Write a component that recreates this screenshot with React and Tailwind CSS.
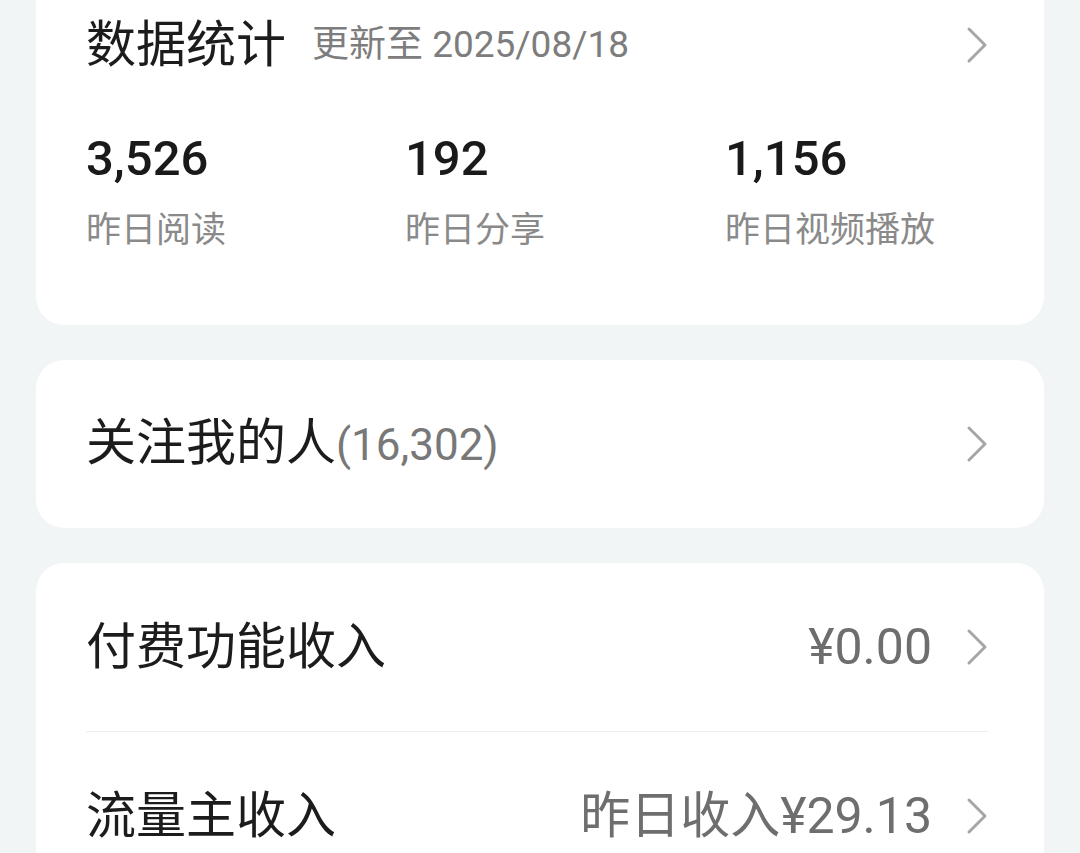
import React from 'react';

const font = { fontFamily: 'Roboto, "Noto Sans CJK SC", sans-serif' };

// 统计数据
const stats = [
  { value: '3,526', label: '昨日阅读' },
  { value: '192', label: '昨日分享' },
  { value: '1,156', label: '昨日视频播放' },
];

function Chevron() {
  return (
    <svg width="22" height="38" viewBox="0 0 22 38" className="shrink-0">
      <polyline
        points="3,3 19,19 3,35"
        fill="none"
        stroke="#a6a6a6"
        strokeWidth="3"
        strokeLinecap="round"
        strokeLinejoin="round"
      />
    </svg>
  );
}

function Row({ title, value }) {
  return (
    <div className="h-[168px] flex items-center justify-between">
      <span className="text-[50px] leading-[60px] text-[#1c1c1c]">{title}</span>
      <div className="flex items-center gap-[34px]">
        {value && <span className="text-[50px] leading-[60px] text-[#6e6e6e]">{value}</span>}
        <Chevron />
      </div>
    </div>
  );
}

export default function App() {
  return (
    <div className="w-[1080px] h-[853px] overflow-hidden bg-[#f1f5f5] px-[36px]" style={font}>
      {/* --- 数据统计 --- */}
      <div className="-mt-[40px] pt-[40px] pb-[72px] pl-[50px] pr-[56px] bg-white rounded-[28px]">
        <div className="h-[90px] flex items-center justify-between">
          <div className="flex items-center gap-[26px]">
            <span className="text-[50px] leading-[60px] text-[#1c1c1c]">数据统计</span>
            <span className="text-[37px] leading-[44px] text-[#7d7d7d]">更新至 2025/08/18</span>
          </div>
          <Chevron />
        </div>
        <div className="grid grid-cols-[319px_320px_1fr] mt-[39px]">
          {stats.map((s, i) => (
            <div key={i}>
              <p className="text-[49px] leading-[60px] font-medium text-[#1a1a1a]">{s.value}</p>
              <p className="mt-[20px] text-[35px] leading-[44px] text-[#8a8a8a]">{s.label}</p>
            </div>
          ))}
        </div>
      </div>

      {/* --- 关注我的人 --- */}
      <div className="mt-[35px] h-[168px] pl-[50px] pr-[56px] bg-white rounded-[28px] flex items-center justify-between">
        <p className="text-[50px] leading-[60px] text-[#1c1c1c]">
          关注我的人<span className="text-[44px] text-[#787878]">(16,302)</span>
        </p>
        <Chevron />
      </div>

      {/* --- 收入 --- */}
      <div className="mt-[35px] pl-[50px] pr-[56px] bg-white rounded-[28px]">
        <Row title="付费功能收入" value="¥0.00" />
        <div className="h-px bg-[#eeeeee]" />
        <Row title="流量主收入" value="昨日收入¥29.13" />
      </div>
    </div>
  );
}
